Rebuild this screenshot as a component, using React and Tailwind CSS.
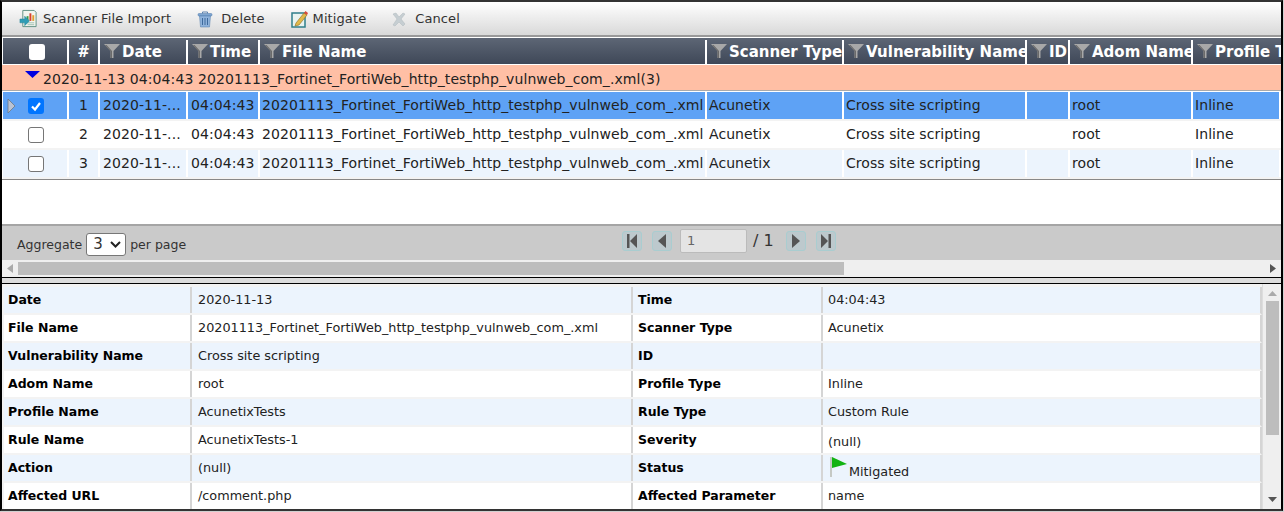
import React from 'react';

const gridCols = 'grid grid-cols-[66px_31px_88px_72px_447px_137px_183px_43px_123px_1fr] ml-[1px]';
const fileName = '20201113_Fortinet_FortiWeb_http_testphp_vulnweb_com_.xml';

const columns = ['Date', 'Time', 'File Name', 'Scanner Type', 'Vulnerability Name', 'ID', 'Adom Name', 'Profile Type'];

const details = [
    ['Date', '2020-11-13', 'Time', '04:04:43'],
    ['File Name', fileName, 'Scanner Type', 'Acunetix'],
    ['Vulnerability Name', 'Cross site scripting', 'ID', ''],
    ['Adom Name', 'root', 'Profile Type', 'Inline'],
    ['Profile Name', 'AcunetixTests', 'Rule Type', 'Custom Rule'],
    ['Rule Name', 'AcunetixTests-1', 'Severity', '(null)'],
    ['Action', '(null)', 'Status', 'Mitigated'],
    ['Affected URL', '/comment.php', 'Affected Parameter', 'name'],
];

const ImportIcon = () => (
    <svg width="19" height="20" viewBox="0 0 20 20">
        <path d="M4 1h12l2 2v15H4z" fill="#f2f5ef" stroke="#5f8f83" />
        <rect x="8" y="7" width="2" height="5" fill="#3f9a4a" />
        <rect x="11" y="4" width="2" height="8" fill="#d8402f" />
        <rect x="14" y="6" width="2" height="6" fill="#e0a030" />
        <path d="M6 14h10M9 16h7" stroke="#9fc0b0" />
        <path d="M1 10h5V7l5 5-5 5v-3H1z" fill="#2f9cb5" stroke="#1f7f95" strokeWidth="0.5" />
    </svg>
);

const TrashIcon = () => (
    <svg width="16" height="17" viewBox="0 0 16 17">
        <path d="M5.500 2.500V1h5v1.500" fill="none" stroke="#5a82b0" />
        <rect x="1" y="2.500" width="14" height="2.500" rx="1" fill="#7fa6d2" stroke="#4f79a8" strokeWidth="0.5" />
        <path d="M2.500 5h11l-1 11h-9z" fill="#8fb3dc" stroke="#4f79a8" strokeWidth="0.5" />
        <path d="M5.500 7v7M8 7v7M10.500 7v7" stroke="#3e6a9c" />
    </svg>
);

const MitigateIcon = () => (
    <svg width="17" height="18" viewBox="0 0 17 18">
        <rect x="1" y="3" width="13" height="14" fill="#e8f3f0" stroke="#2f7f8a" strokeWidth="1.500" />
        <path d="M5 13 13 3l3 2-8 10-4 1z" fill="#e2b94a" stroke="#8a6a20" strokeWidth="0.6" />
        <path d="M13 3l1.500-2L17 3l-1 2z" fill="#d84a3a" />
    </svg>
);

const CancelIcon = () => (
    <svg width="16" height="16" viewBox="0 0 16 16">
        <path d="M2 3l3-1 3 4 4-4 2 1-4 5 4 5-2 2-4-4-4 4-2-1 4-6z" fill="#c6ced2" stroke="#aeb8bd" strokeWidth="0.5" />
    </svg>
);

const FilterIcon = () => (
    <svg width="16" height="14" viewBox="0 0 16 14" className="shrink-0 mr-[2px] mb-[3px]">
        <path d="M0 0h16L9.500 7v7h-3V7z" fill="#a8a8a8" />
        <path d="M6.500 7v7H8V7L2.500 1H1z" fill="#6a6a6a" />
    </svg>
);

const PagerButton = ({ path }) => (
    <span className="w-[20px] h-[20px] rounded-[3px] bg-[#bdc9cd] border border-[#a9cdd0] flex items-center justify-center">
        <svg width="12" height="14" viewBox="0 0 12 14"><path d={path} fill="#555" /></svg>
    </span>
);

const Checkbox = ({ checked }) => (
    checked ? (
        <span className="w-4 h-4 rounded-[3px] bg-[#0075ff] flex items-center justify-center">
            <svg width="12" height="12" viewBox="0 0 12 12"><path d="M2 6.500 5 9.500 10 3" fill="none" stroke="#fff" strokeWidth="2.200" /></svg>
        </span>
    ) : (
        <span className="w-4 h-4 rounded-[3px] bg-white border border-[#767676]" />
    )
);

const GridRow = ({ num, selected, alt }) => {
    const bg = selected ? 'bg-[#5ea2f5]' : alt ? 'bg-[#ecf4fd]' : 'bg-white';
    const cell = 'flex items-center px-[3px] overflow-hidden whitespace-nowrap border-r-2 border-r-white';
    return (
        <div className={`${gridCols} ${bg} h-[29px] border-b-2 border-b-[#f3f3f3] text-[14px] tracking-[0.07px] text-[#222]`}>
            <div className={`${cell} relative justify-center pl-[4px]`}>
                {selected && (
                    <svg width="9" height="14" viewBox="0 0 9 14" className="absolute left-[4px] top-[7px]">
                        <path d="M1 0l7 7-7 7z" fill="#b9c3d4" stroke="#6c7785" strokeWidth="0.8" />
                    </svg>
                )}
                <Checkbox checked={selected} />
            </div>
            <div className={`${cell} justify-center`}>{num}</div>
            <div className={cell}>2020-11-...</div>
            <div className={cell}>04:04:43</div>
            <div className={`${cell} pl-[2px]`}>{fileName}</div>
            <div className={`${cell} pl-[2px]`}>Acunetix</div>
            <div className={`${cell} pl-[2px]`}>Cross site scripting</div>
            <div className={cell}></div>
            <div className={`${cell} pl-[2px]`}>root</div>
            <div className={`${cell} pl-[2px] border-r-0`}>Inline</div>
        </div>
    );
};

const DetailRow = ({ row, alt }) => (
    <div className={`grid grid-cols-[188px_441px_190px_1fr] h-[28px] text-[12.8px] text-[#222] ${alt ? 'bg-[#ecf4fd]' : 'bg-white'} border-b-2 border-b-[#f3f3f3] border-r-2 border-r-[#d5d5d5]`}>
        <div className="flex items-center pl-[4px] text-[12.5px] font-bold text-black border-r-2 border-r-[#d5d5d5] whitespace-nowrap">{row[0]}</div>
        <div className="flex items-center pl-[6px] border-r-2 border-r-[#d5d5d5] whitespace-nowrap">{row[1]}</div>
        <div className="flex items-center pl-[5px] text-[12.5px] font-bold text-black border-r-2 border-r-[#d5d5d5] whitespace-nowrap">{row[2]}</div>
        <div className="flex items-center pl-[5px] whitespace-nowrap">
            {row[3] === 'Mitigated' ? (
                <span className="flex items-end pl-[2px]">
                    <svg width="19" height="20" viewBox="0 0 19 20" className="mb-[2px]">
                        <rect x="0" y="0" width="2" height="20" fill="#c5c9c5" />
                        <path d="M2 0l15 7-15 4z" fill="#12b312" />
                    </svg>
                    <span className="mb-[-2px]">Mitigated</span>
                </span>
            ) : row[3] === '(null)' ? <span className="mt-[4px]">(null)</span> : row[3]}
        </div>
    </div>
);

export default function App() {
    return (
        <div className="w-[1284px] h-[512px] bg-[#d0d0d0]">
            <div className="w-[1283px] h-[511px] overflow-hidden bg-white border-x-2 border-x-black border-t-2 border-t-[#333] border-b-2 border-b-[#333] font-['DejaVu_Sans',sans-serif] flex flex-col">
                <div className="h-[35px] shrink-0 flex items-center pl-[17px] pt-[1px] gap-[25px] text-[13px] tracking-[0.1px] text-[#333] bg-gradient-to-b from-white to-[#d9d9d9] border-b-2 border-b-[#999]">
                    <span className="flex items-center gap-[5px] mr-[1px]"><ImportIcon />Scanner File Import</span>
                    <span className="flex items-center gap-[8px] mr-[1px]"><TrashIcon />Delete</span>
                    <span className="flex items-center gap-[5px]"><MitigateIcon />Mitigate</span>
                    <span className="flex items-center gap-[8px]"><CancelIcon />Cancel</span>
                </div>

                <div className={`${gridCols} h-[27px] shrink-0 mt-[1px] pt-[2px] bg-gradient-to-b from-[#5d6675] to-[#3f4858] text-white font-bold text-[15px] border-b border-b-white`}>
                    <div className="flex items-center justify-center pl-[4px] border-r-2 border-r-white">
                        <span className="w-4 h-4 rounded-[3px] bg-white" />
                    </div>
                    <div className="flex items-center justify-center border-r-2 border-r-white">#</div>
                    {columns.map((c, i) => (
                        <div key={c} className={`flex items-center pl-[4px] overflow-hidden whitespace-nowrap ${i < columns.length - 1 ? 'border-r-2 border-r-white' : ''}`}>
                            <FilterIcon />{c}
                        </div>
                    ))}
                </div>

                <div className="h-[26px] mb-[1px] shrink-0 bg-[#ffbfa5] border-b border-b-[#aaa] text-[14px] tracking-[0.09px] text-[#222] flex items-center relative pl-[41px] whitespace-nowrap">
                    <svg width="15" height="7" viewBox="0 0 15 7" className="absolute left-[23px] top-[6px]"><path d="M0 0h15L7.500 7z" fill="#0000e0" /></svg>
                    <span className="mt-[4px]">2020-11-13 04:04:43 {fileName}(3)</span>
                </div>

                <GridRow num="1" selected />
                <GridRow num="2" />
                <GridRow num="3" alt />

                <div className="h-[45px] shrink-0 border-t border-t-[#888] bg-white" />

                <div className="h-[36px] shrink-0 bg-[#cacaca] border-t-2 border-t-[#a5a5a5] flex items-center relative text-[12.5px] text-[#333] pl-[15px]">
                    <span className="mt-[4px]">Aggregate</span>
                    <span className="mx-[4px] mt-[3px] w-[40px] h-[23px] bg-white border border-[#777] rounded-[3px] flex items-center justify-between pl-[6px] pr-[4px] text-[15px]">
                        3
                        <svg width="11" height="7" viewBox="0 0 11 7"><path d="M1 1l4.500 4.500L10 1" fill="none" stroke="#222" strokeWidth="2" /></svg>
                    </span>
                    <span className="mt-[4px]">per page</span>
                    <div className="absolute left-[620px] top-[3px] flex items-center text-[16px]">
                        <PagerButton path="M1 0h2.500v14H1zM11 0v14L4 7z" />
                        <span className="w-[10px]" />
                        <PagerButton path="M10 0v14L2 7z" />
                        <span className="w-[8px]" />
                        <span className="w-[67px] h-[24px] bg-[#e4e4e4] border border-[#bbb] rounded-[2px] flex items-center pl-[6px] text-[13px] text-[#666]">1</span>
                        <span className="ml-[6px] w-[33px] whitespace-nowrap">/ 1</span>
                        <PagerButton path="M2 0v14l8-7z" />
                        <span className="w-[10px]" />
                        <PagerButton path="M1 0v14l7-7zM8.500 0H11v14H8.500z" />
                    </div>
                </div>

                <div className="h-[17px] shrink-0 bg-[#efefef] flex items-center">
                    <span className="w-[16px] flex justify-center"><svg width="6" height="9" viewBox="0 0 6 9"><path d="M6 0v9L0 4.500z" fill="#aaa" /></svg></span>
                    <span className="w-[826px] h-[13px] bg-[#bdbdbd]" />
                    <span className="flex-1" />
                    <span className="w-[17px] flex justify-center"><svg width="6" height="9" viewBox="0 0 6 9"><path d="M0 0v9l6-4.500z" fill="#555" /></svg></span>
                </div>

                <div className="h-[5px] shrink-0 bg-[#dcdcdc] border-y border-y-black box-content" />

                <div className="flex-1 min-h-0 flex overflow-hidden pl-[2px] bg-[#f3f3f3]">
                    <div className="w-[1258px] pt-[3px] shrink-0">
                        {details.map((row, i) => <DetailRow key={row[0]} row={row} alt={i % 2 === 0} />)}
                    </div>
                    <div className="flex-1 bg-[#efefef] border-l border-l-[#ddd] flex flex-col items-center pt-[7px]">
                        <svg width="9" height="5" viewBox="0 0 9 5"><path d="M0 5h9L4.500 0z" fill="#aaa" /></svg>
                        <span className="w-[13px] h-[134px] bg-[#bdbdbd] mt-[5px]" />
                        <svg width="9" height="5" viewBox="0 0 9 5" className="mt-auto mb-[7px]"><path d="M0 0h9L4.500 5z" fill="#555" /></svg>
                    </div>
                </div>
            </div>
        </div>
    );
}
